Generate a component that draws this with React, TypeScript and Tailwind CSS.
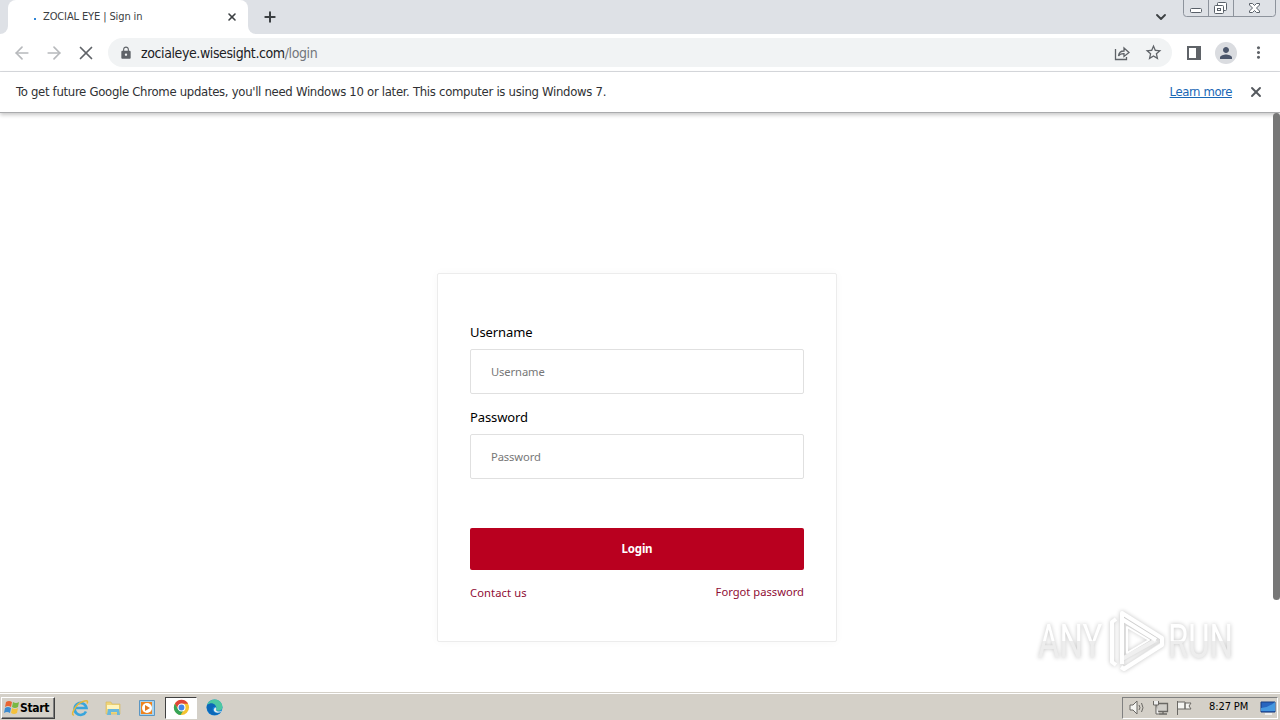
import React from 'react';
import { ChevronDown, Plus, X, ArrowLeft, ArrowRight } from 'lucide-react';
import { MdLock, MdStarOutline, MdPerson, MdMoreVert } from 'react-icons/md';

const WindowControls = () => (
  <svg className="absolute right-1 top-0" width="93" height="17" viewBox="0 0 93 17" fill="none">
    <path d="M.5 0v13.5q0 3 3 3h86q3 0 3-3V0M25.500 0v16M50.500 0v16" stroke="#8d939c" />
    <rect x="7.500" y="8.500" width="11" height="4" rx="1" fill="#fff" stroke="#596069" />
    <rect x="34.500" y="2.500" width="9" height="8" rx="1" fill="#fff" stroke="#596069" />
    <rect x="31.500" y="5.500" width="9" height="8" rx="1" fill="#fff" stroke="#596069" />
    <rect x="34.500" y="8.500" width="3" height="2" stroke="#596069" />
    <path d="M66.500 3.500h3l2 2 2-2h3v1.500l-3 3 3 3v1.500h-3l-2-2-2 2h-3v-1.500l3-3-3-3z" fill="#fff" stroke="#596069" />
  </svg>
);

const TabBar = () => (
  <div className="relative flex h-[34px] bg-[#dee1e6]">
    <div className="h-full w-2 bg-white">
      <div className="h-full rounded-br-lg bg-[#dee1e6]" />
    </div>
    <div className="flex w-60 items-center rounded-t-lg bg-white pl-[26px] pr-[10px] text-[#3c4043]">
      <span className="mr-[7px] mt-1 h-[2px] w-[2px] bg-[#2f86d8]" />
      <span className="whitespace-nowrap text-[11px] tracking-[-0.12px]">ZOCIAL EYE | Sign in</span>
      <X className="ml-auto" size={12} strokeWidth={3.2} />
    </div>
    <div className="h-full w-2 bg-white">
      <div className="h-full rounded-bl-lg bg-[#dee1e6]" />
    </div>
    <Plus className="ml-[6px] mt-[9px] text-[#3c4043]" size={16} strokeWidth={3} />
    <ChevronDown className="absolute left-[1153px] top-[9px] text-[#3c4043]" size={16} strokeWidth={2.8} />
    <WindowControls />
  </div>
);

const Toolbar = () => (
  <div className="flex h-[38px] items-center border-b border-[#d9dbdf] bg-white pl-3">
    <ArrowLeft className="text-[#b7b9bc]" size={20} strokeWidth={2} />
    <ArrowRight className="ml-3 text-[#b7b9bc]" size={20} strokeWidth={2} />
    <X className="ml-[11px] text-[#5f6368]" size={22} strokeWidth={1.9} />
    <div className="ml-[11px] flex h-[29px] w-[1064px] items-center rounded-full bg-[#f1f3f4] pl-[11px] pr-[9px]">
      <MdLock className="text-[#5f6368]" size={14} />
      <span className="ml-2 mt-px whitespace-nowrap text-[14px] tracking-[-0.4px] text-[#202124]">
        zocialeye.wisesight.com<span className="text-[#73777c]">/login</span>
      </span>
      <svg className="ml-auto" width="16" height="16" viewBox="0 0 16 16" fill="none" stroke="#5f6368" strokeWidth="1.300">
        <path d="M1.500 4v10.500h11V12" />
        <path d="M4.500 11q.5-5 5.500-5V3l5 4.500-5 4V8.700Q6 8.500 4.500 11z" />
      </svg>
      <MdStarOutline className="ml-[14px] text-[#5f6368]" size={19} />
    </div>
    <svg className="ml-[15px]" width="14" height="14" fill="none">
      <path d="M1 1h12v12H1z" stroke="#5f6368" strokeWidth="2" />
      <path d="M9 1h4v12H9z" fill="#5f6368" />
    </svg>
    <div className="ml-[14px] flex h-[22px] w-[22px] items-center justify-center rounded-full bg-[#dadce0]">
      <MdPerson className="text-[#4b566b]" size={18} />
    </div>
    <MdMoreVert className="ml-3 text-[#5f6368]" size={19} />
  </div>
);

const InfoBar = () => (
  <div className="relative flex h-[41px] items-center border-b border-[#aaabad] bg-white pl-4 pr-4 text-[13px] shadow-[0_2px_4px_rgba(0,0,0,0.22)]">
    <span className="whitespace-nowrap tracking-[-0.304px] text-[#303134]">
      To get future Google Chrome updates, you'll need Windows 10 or later. This computer is using Windows 7.
    </span>
    <a className="ml-auto whitespace-nowrap tracking-[-0.42px] text-[#1967b5] underline">Learn more</a>
    <X className="ml-4 text-[#55595e]" size={16} strokeWidth={2.8} />
  </div>
);

const fields = [
  { label: 'Username', type: 'text' },
  { label: 'Password', type: 'password' },
];

const LoginCard = () => (
  <form className="h-[369px] w-[400px] rounded-[2px] border border-[#ececec] bg-white px-8 pt-[48px] font-['Noto_Sans',sans-serif] shadow-[0_0_10px_rgba(0,0,0,0.03)]">
    {fields.map((field) => (
      <div key={field.label} className="h-[85px]">
        <label className="block h-[27px] text-[13px] leading-[20px] tracking-[-0.1px] text-black">{field.label}</label>
        <input
          type={field.type}
          placeholder={field.label}
          className="h-[45px] w-full rounded-[2px] border border-[#e0e0e0] px-5 text-[11.200px] tracking-[-0.1px] placeholder:text-[#777]"
        />
      </div>
    ))}
    <button type="button" className="mt-[36px] block h-[42px] w-full rounded-[2px] bg-[#b9001f] text-[11.500px] font-bold tracking-[-0.2px] text-white">
      Login
    </button>
    <div className="mt-[13px] flex justify-between text-[11.200px] leading-[18px] text-[#8f0d35]">
      <a className="pt-px tracking-[0.1px]">Contact us</a>
      <a>Forgot password</a>
    </div>
  </form>
);

const Watermark = () => (
  <div className="absolute left-[1038px] top-[608px] flex h-[66px] items-center font-[Roboto,sans-serif] text-[49px] leading-none drop-shadow-[0_0_2px_rgba(0,0,0,0.24)]">
    <div className="w-[70px]">
      <span className="inline-block w-max origin-left scale-x-[0.67] bg-gradient-to-b from-white from-50% to-[#ededed] to-50% bg-clip-text text-transparent">ANY</span>
    </div>
    <svg width="58" height="64" viewBox="0 0 58 64" fill="none" stroke="#fff" strokeWidth="4" strokeLinejoin="round">
      <path d="M14 55V50L48 31M16 60l38-25" stroke="#f0f0f0" />
      <path d="M8 10 4 13v40l4 3M14 55V4l40 25v7L16 60l-3-2M48 31 14 10" />
      <path d="M19 18v26l22-13z" strokeWidth="2" />
    </svg>
    <div className="ml-[2px] w-16">
      <span className="inline-block w-max origin-left scale-x-[0.67] bg-gradient-to-b from-white from-50% to-[#ededed] to-50% bg-clip-text text-transparent">RUN</span>
    </div>
  </div>
);

const Taskbar = () => (
  <div className="flex h-[28px] items-center border-t border-[#d4d0c8] bg-[#d4d0c8] pt-[2px] shadow-[inset_0_1px_0_#fff]">
    <div className="ml-px flex h-[22px] w-[54px] items-center border border-b-[#404040] border-l-white border-r-[#404040] border-t-white text-[12px] font-bold text-black shadow-[inset_-1px_-1px_0_#808080]">
      <svg className="ml-px shrink-0" width="17" height="17" viewBox="0 0 17 17">
        <path d="M3 3q3-2 6 0L8 8Q5 6 2 8z" fill="#e86532" />
        <path d="M10 3q3 2 6 0l-1 5q-3 2-6 0z" fill="#79b842" />
        <path d="M2 9q3-2 6 0l-1 5q-3-2-6 0z" fill="#3c8bd0" />
        <path d="M9 9q3 2 6 0l-1 5q-3 2-6 0z" fill="#f5c13c" />
      </svg>
      <span className="tracking-[-0.3px]">Start</span>
    </div>
    <svg className="ml-[15px]" width="20" height="20" viewBox="0 0 20 20" fill="none">
      <path d="M16 13.500a6 6 0 1 1 .5-3.500H6" stroke="#39a5dc" strokeWidth="2.600" />
      <path d="M4 17C0 18 5 6 13 3.500q6-2 4 2" stroke="#e5b83b" strokeWidth="1.500" />
    </svg>
    <svg className="ml-[14px]" width="18" height="18" viewBox="0 0 18 18">
      <path d="M2 3h5l1 2h8v10H2z" fill="#efd478" stroke="#d5b65c" strokeWidth=".6" />
      <path d="M3 6h12v4H3z" fill="#fff5bd" />
      <path d="M4 10h11l1 6h-3v-3H7v3H3z" fill="#69b8dc" />
    </svg>
    <svg className="ml-4" width="18" height="18" viewBox="0 0 18 18">
      <path d="M1.500 1.500h15v15h-15z" fill="#a8d2ec" stroke="#5b96c3" />
      <rect x="3" y="3" width="11" height="12" fill="#ee8420" />
      <circle cx="9" cy="9" r="5" fill="#fff" />
      <path d="m7 6 5 3-5 3z" fill="#e27a20" />
    </svg>
    <div className="ml-[9px] flex h-[22px] w-[32px] items-center justify-center border border-b-white border-l-[#404040] border-r-white border-t-[#404040] bg-white">
      <svg width="17" height="17" viewBox="0 0 18 18">
        <circle cx="9" cy="9" r="8" fill="#f4c331" />
        <path d="M2 5a8 8 0 0 1 14 0H9a4 4 0 0 0-3.500 6z" fill="#df4538" />
        <path d="M2 5a8 8 0 0 0 6 12l3.500-5.500-6-.5z" fill="#36a457" />
        <circle cx="9" cy="9" r="3.700" fill="#4285e8" stroke="#fff" strokeWidth="1.200" />
      </svg>
    </div>
    <svg className="ml-[9px]" width="17" height="17" viewBox="0 0 17 17">
      <circle cx="8.500" cy="8.500" r="8" fill="#1684d8" />
      <path d="M1 6C4-2 16-1 16.500 8c0 4-5 4.500-6.500 3 2-4-3-7-9-5z" fill="#4dc8a2" />
      <path d="M1 6c5-4 9 0 9 2-3-1-4 1-3 4q3 4 8 1A8 8 0 0 1 1 6z" fill="#0c68b8" />
      <path d="M9 8.500c2 0 1 2 1 2.500 1 2 5 2 6.500 0L15 13q-5 2-7-1-1-2 1-3.500z" fill="#e5eceb" />
    </svg>
    <div className="ml-auto mr-[2px] flex h-[22px] w-[156px] items-center border border-b-white border-l-[#808080] border-r-white border-t-[#808080] pl-[5px] text-[11px] text-black">
      <svg width="68" height="18" viewBox="0 0 68 18" fill="#f5f5f2" stroke="#6a6864">
        <path d="M2 6h3l4-4v13l-4-4H2z" />
        <path d="M11 6q2 3 0 5M13.500 4q3 5 0 9" fill="none" />
        <path d="M28.500 4.500h11v8h-11zM31 15h8M35 13v2" fill="#d0cec9" strokeWidth="1.300" />
        <path d="M25.500 2v4h5V2M28 6v9h3" fill="#eee" />
        <path d="M49.500 16V2M50 3h7v7h-7M57 4h6l-2 3 2 3h-6z" />
      </svg>
      <span className="ml-[13px] whitespace-nowrap tracking-[-0.1px]">8:27 PM</span>
      <svg className="ml-auto mr-px" width="16" height="16" viewBox="0 0 16 16">
        <path d="M1 2h14v10H1z" fill="#2765bf" stroke="#163d81" />
        <path d="M1 8q7 0 14-6v9H1z" fill="#4698df" />
        <path d="M5 13h7v2H5z" fill="#efefef" />
      </svg>
    </div>
  </div>
);

const App = () => {
  return (
    <div className="relative flex h-screen flex-col overflow-hidden bg-white font-['DejaVu_Sans_Condensed','DejaVu_Sans',sans-serif]">
      <TabBar />
      <Toolbar />
      <InfoBar />
      <main className="relative flex-1 pl-[437px] pt-[160px]">
        <LoginCard />
        <div className="absolute right-0 top-0 h-[487px] w-[7px] rounded-full bg-[#777]" />
      </main>
      <Taskbar />
      <Watermark />
    </div>
  );
};

export default App;
